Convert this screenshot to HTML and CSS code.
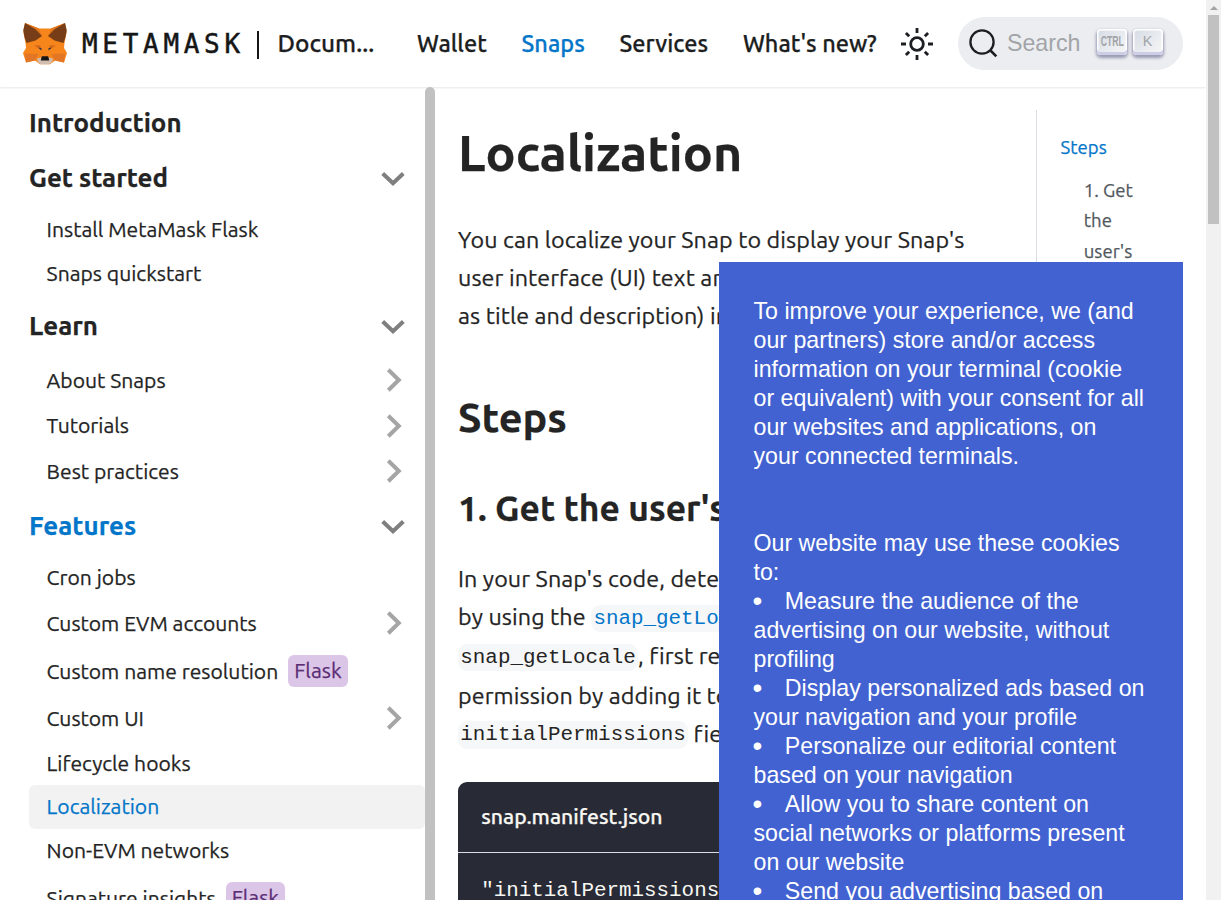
FILE: index.html
```
<!DOCTYPE html>
<html lang="en">
<head>
<meta charset="utf-8">
<title>Localization | MetaMask developer documentation</title>
<link rel="stylesheet" href="styles.css">
</head>
<body>
<svg class="defs" aria-hidden="true">
  <symbol id="down" viewBox="0 0 24 24"><path d="M1.7 7.5 12 17.3 22.3 7.5" fill="none" stroke="#7f7f7f" stroke-width="4"/></symbol>
  <symbol id="right" viewBox="0 0 24 24"><path d="M6.3 1.7 16.8 12 6.3 22.3" fill="none" stroke="#a5a5a5" stroke-width="4"/></symbol>
</svg>
<div class="window">
  <div class="page">
    <header class="navbar">
      <a class="brand">
        <svg class="fox" viewBox="0 0 44 42">
          <path d="M2 0 16 5.500H28L42 0 43.700 9 41.500 20 41 25 44 30 41 39.500 32 37.500 27 41.200H17L12 37.500 3 39.500 0 30 3 25 2.500 20 .300 9Z" fill="#f6851b"/>
          <path d="M2 0 16 5.500 18.500 13 12 6.500ZM42 0 28 5.500 25.500 13 32 6.500Z" fill="#e2761b"/>
          <path d="M2 0 12.500 6.300 19 13 12.500 17.500 3.500 20 1.500 14 .300 7ZM42 0 31.500 6.300 25 13 31.500 17.500 40.500 20 42.500 14 43.700 7Z" fill="#763d16"/>
          <path d="M2 30.500 3 39.500 12 37.500 15.500 31ZM42 30.500 41 39.500 32 37.500 28.500 31Z" fill="#e27625"/>
          <path d="M11 22.500 17 22 19 27.500ZM33 22.500 27 22 25 27.500Z" fill="#d96a1a"/>
          <path d="M15 24.500 18.500 25.300 18.300 27.300ZM29 24.500 25.500 25.300 25.700 27.300Z" fill="#233447"/>
          <path d="M14 35.500 18 34.500H26L30 35.500 29 39 26.500 41.200H17.500L15 39Z" fill="#d0bdb0"/>
          <path d="M18.800 33.300H25.200L26.200 37.400H17.800Z" fill="#161616"/>
        </svg>
        <span class="wordmark">METAMASK</span>
        <span class="divider"></span>
        <span class="product">Docum...</span>
      </a>
      <nav class="links">
        <a>Wallet</a><a class="active">Snaps</a><a>Services</a><a>What's new?</a>
      </nav>
      <svg class="sun" viewBox="0 0 34 34" fill="none" stroke="#1c1e21" stroke-width="2.800">
        <circle cx="17" cy="17" r="6.300"/>
        <path d="M17 1v5M17 28v5M1 17h5M28 17h5M5.900 5.900l3.300 3.300M24.800 24.800l3.300 3.300M5.900 28.100l3.300-3.300M24.800 9.200l3.300-3.300"/>
      </svg>
      <div class="search">
        <svg class="glass" viewBox="0 0 29 29" fill="none" stroke="#1c1e21" stroke-width="2.300"><circle cx="13" cy="13" r="11.600"/><path d="m21 21 6.300 6.300" stroke-width="2.600"/></svg>
        <span class="placeholder">Search</span>
        <kbd><span class="ctrl">CTRL</span></kbd><kbd>K</kbd>
      </div>
    </header>
    <div class="body">
      <aside class="sidebar">
        <ul class="menu">
          <li class="group">Introduction</li>
          <li class="group">Get started<svg><use href="#down"/></svg></li>
          <li>Install MetaMask Flask</li>
          <li>Snaps quickstart</li>
          <li class="group">Learn<svg><use href="#down"/></svg></li>
          <li class="category">About Snaps<svg><use href="#right"/></svg></li>
          <li class="category">Tutorials<svg><use href="#right"/></svg></li>
          <li class="category">Best practices<svg><use href="#right"/></svg></li>
          <li class="group active">Features<svg><use href="#down"/></svg></li>
          <li>Cron jobs</li>
          <li class="category">Custom EVM accounts<svg><use href="#right"/></svg></li>
          <li class="tagged">Custom name resolution<span class="badge">Flask</span></li>
          <li class="category">Custom UI<svg><use href="#right"/></svg></li>
          <li class="plain">Lifecycle hooks</li>
          <li class="current">Localization</li>
          <li>Non-EVM networks</li>
          <li class="tagged">Signature insights<span class="badge">Flask</span></li>
        </ul>
        <div class="side-scroll"></div>
      </aside>
      <main class="doc">
        <h1>Localization</h1>
        <p>You can localize your Snap to display your Snap's<br>user interface (UI) text and<br>as title and description) in</p>
        <h2>Steps</h2>
        <h3>1. Get the user's</h3>
        <p>In your Snap's code, detect<br>by using the <code class="link">snap_getLocale</code><br><code>snap_getLocale</code>, first req<br>permission by adding it to<br><code>initialPermissions</code> field</p>
        <div class="codeblock">
          <div class="filename">snap.manifest.json</div>
          <pre>"initialPermissions"</pre>
        </div>
      </main>
      <aside class="toc">
        <div class="toc-list">
          <a class="active">Steps</a>
          <a class="nested">1. Get<br>the<br>user's</a>
        </div>
      </aside>
    </div>
    <section class="consent">
      <p>To improve your experience, we (and<br>our partners) store and/or access<br>information on your terminal (cookie<br>or equivalent) with your consent for all<br>our websites and applications, on<br>your connected terminals.</p>
      <p>Our website may use these cookies<br>to:<br><i>•</i>Measure the audience of the<br>advertising on our website, without<br>profiling<br><i>•</i>Display personalized ads based on<br>your navigation and your profile<br><i>•</i>Personalize our editorial content<br>based on your navigation<br><i>•</i>Allow you to share content on<br>social networks or platforms present<br>on our website<br><i>•</i>Send you advertising based on</p>
    </section>
  </div>
  <div class="scrollbar"><span class="arrow"></span><span class="thumb"></span></div>
</div>
</body>
</html>
```
FILE: styles.css
```
* { box-sizing: border-box; }

body {
  margin: 0;
  color: #242424;
  background: #fff;
  font: 400 23.3px/38.28px Ubuntu, "Noto Sans", sans-serif;
  -webkit-text-stroke: .25px currentColor;
}

.defs { display: none; }

.window {
  display: flex;
  width: 1221px;
  height: 900px;
  overflow: hidden;
}

.page {
  position: relative;
  display: flex;
  flex-direction: column;
  width: 1206px;
  height: 900px;
  overflow: hidden;
}

/* Top bar */
.navbar {
  display: flex;
  align-items: center;
  flex: none;
  height: 87px;
  padding: 0 23px;
  color: #1c1e21;
  font-weight: 500;
  font-size: 23.5px;
  white-space: nowrap;
  box-shadow: 0 1px 2px rgba(0, 0, 0, .1);
}

.brand { display: flex; align-items: center; width: 352px; }
.fox { width: 44px; height: 42px; margin-right: 15px; }

.wordmark {
  width: 175px;
  color: #161616;
  font: 400 26px/38px "DejaVu Sans Mono", monospace;
  letter-spacing: 4.7px;
  -webkit-text-stroke: .5px #161616;
}

.divider { width: 2px; height: 28px; margin: 2px 18.500px 0 0; background: #161616; }
.product { font-size: 24.4px; }

.links { display: flex; gap: 34.8px; margin-left: 42px; }
.active { color: #0376c9; }
.sun { width: 34px; height: 34px; margin-left: 23.5px; }

.search {
  display: flex;
  align-items: center;
  width: 225px;
  height: 53px;
  margin-left: auto;
  padding-left: 11px;
  border-radius: 27px;
  background: #ebedf0;
  -webkit-text-stroke: 0;
}

.glass { width: 29px; height: 29px; }
.placeholder {
  width: 90px;
  height: 32px;
  margin-left: 9px;
  color: #a2a4a8;
  font: 400 23.2px/30px "Liberation Sans", sans-serif;
}

kbd {
  display: flex;
  justify-content: center;
  width: 30px;
  height: 26px;
  margin: 0 5.500px 3px 0;
  border-radius: 4px;
  color: #a2a4a8;
  background: linear-gradient(-225deg, #d5dbe4, #f8f8f8);
  box-shadow: inset 0 -3px 0 #cdcde6, inset 0 0 1px 1.500px #fff, 0 2px 3px 1px rgba(30, 35, 90, .4);
  font: 400 14.500px/24px "Liberation Sans", sans-serif;
}
.ctrl { font-weight: 700; transform: scaleX(.6); }

/* Navigation tree */
.body { display: flex; flex: 1; min-height: 0; }
.sidebar { display: flex; width: 435px; }
.menu {
  width: 425px;
  margin: 0;
  padding: 9px 0 0 29px;
  list-style: none;
  white-space: nowrap;
}
.menu li {
  display: flex;
  align-items: center;
  height: 44px;
  padding: 0 0 2px 17.600px;
  border-radius: 6px;
  font-size: 21.100px;
}
.menu .group {
  height: 56px;
  margin-bottom: 2px;
  padding: 0;
  font-size: 25.900px;
  font-weight: 700;
}
.menu .group:first-child { height: 54px; margin: 0; }
.menu li:not(.group) + .group { margin: 2px 0 3px; }
.menu .category + .active.group { margin: 4px 0 2px; }
.menu .category { height: 45.700px; padding-bottom: 0; }
.menu .tagged { height: 49.800px; padding-bottom: 0; }
.menu .plain { padding-bottom: 0; }
.menu .current { color: #0376c9; background: #f2f2f2; }
.menu svg { width: 24px; height: 24px; margin: 0 20px 0 auto; }
.menu .category svg { margin-right: 19.500px; }
.badge {
  height: 32px;
  margin-left: 10px;
  padding: 0 6px;
  border-radius: 6px;
  color: #5b2d75;
  background: #dcc6e8;
  line-height: 31px;
}
.side-scroll { width: 10px; border-radius: 5px 5px 0 0; background: #c1c1c1; }

/* Article */
.doc { width: 578px; padding: 34px 0 0 23px; white-space: nowrap; }
h1, h2, h3 { margin: 0; font-weight: 700; }
h1 { font-size: 50.200px; line-height: 62px; }
h2 { font-size: 41.400px; line-height: 52px; margin-top: 56.500px; }
h3 { font-size: 35.400px; line-height: 44px; margin-top: 43px; }
.doc p { margin: 29px 0; letter-spacing: .09px; }
.doc h1 + p { margin: 36.500px 0 0; }
code {
  padding: 2.320px;
  border-radius: 9px;
  background: #f6f7f8;
  font: 20.880px/34.450px "Liberation Mono", monospace;
  letter-spacing: 0;
  vertical-align: middle;
  -webkit-text-stroke: 0;
}
.link { color: #0376c9; }
.codeblock {
  width: 520px;
  height: 300px;
  border-radius: 9px;
  color: #f8f8f2;
  background: #282a36;
}
.filename {
  height: 71px;
  padding: 0 23.200px;
  border-bottom: 1px solid #dadde1;
  font-size: 21.200px;
  font-weight: 500;
  line-height: 69px;
}
pre {
  margin: 0;
  padding: 23px 23.200px;
  font: 20.880px/30.300px "Liberation Mono", monospace;
  -webkit-text-stroke: 0;
}

/* Page outline */
.toc { padding: 23px 0 0 23px; }
.toc-list {
  display: flex;
  flex-direction: column;
  gap: 12.300px;
  height: 100%;
  padding: 22.700px 0 0 23.600px;
  border-left: 1px solid #dadde1;
  font-size: 18.560px;
  line-height: 30.600px;
}
.nested { padding-left: 23.200px; color: #525860; }

/* Cookie notice floating over the article */
.consent {
  position: absolute;
  right: 23px;
  bottom: 0;
  width: 464px;
  height: 638px;
  padding: 34.500px 0 0 34.500px;
  color: #fff;
  background: #4262d1;
  font: 400 23.200px/29px "Liberation Sans", sans-serif;
  white-space: nowrap;
  -webkit-text-stroke: 0;
}
.consent p { margin: 0 0 58px; }
.consent i {
  display: inline-block;
  width: 32.200px;
  margin-left: -.900px;
  font-size: 28px;
  font-style: normal;
  line-height: 0;
  vertical-align: -1px;
}

/* Window scrollbar */
.scrollbar { display: flex; flex-direction: column; align-items: center; width: 15px; background: #f1f1f1; }
.arrow { margin: 6px 0 5px; border: 4px solid transparent; border-top: 0; border-bottom-color: #a3a3a3; }
.thumb { width: 11px; height: 209px; background: #c1c1c1; }
```
